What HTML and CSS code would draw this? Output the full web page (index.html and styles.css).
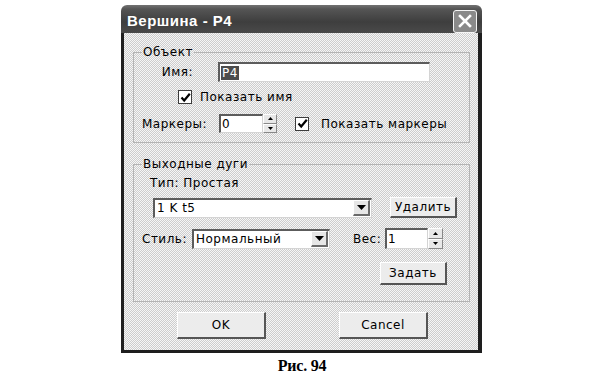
FILE: index.html
```html
<!DOCTYPE html>
<html lang="ru">
<head>
<meta charset="utf-8">
<title>Вершина - P4</title>
<link rel="stylesheet" href="styles.css">
</head>
<body>
<div class="page">
  <div class="window">
    <div class="titlebar">
      <span class="title">Вершина - P4</span>
      <span class="close"><svg width="16" height="16" viewBox="0 0 16 16"><path d="M3 3 L13 13 M13 3 L3 13" stroke="#fff" stroke-width="2.6" stroke-linecap="square"/></svg></span>
    </div>
    <div class="client">
      <fieldset class="group g1">
        <legend>Объект</legend>
        <div class="row r-name">
          <span class="lbl lbl-name">Имя:</span>
          <div class="field f-name"><span class="sel">P4</span></div>
        </div>
        <div class="row r-show">
          <span class="cb"><svg width="11" height="11" viewBox="0 0 11 11"><path d="M1.5 5.5 L4.2 8.5 L9.8 1.8" fill="none" stroke="#000" stroke-width="2.2"/></svg></span>
          <span class="cb-text">Показать имя</span>
        </div>
        <div class="row r-markers">
          <span class="lbl lbl-mark">Маркеры:</span>
          <div class="field f-spin">0</div>
          <div class="spinbtns">
            <span class="sb"><svg width="5" height="3" viewBox="0 0 5 3"><path d="M0 3 L2.5 0 L5 3Z" fill="#000"/></svg></span>
            <span class="sb"><svg width="5" height="3" viewBox="0 0 5 3"><path d="M0 0 L2.5 3 L5 0Z" fill="#000"/></svg></span>
          </div>
          <span class="cb cb-mark"><svg width="11" height="11" viewBox="0 0 11 11"><path d="M1.5 5.5 L4.2 8.5 L9.8 1.8" fill="none" stroke="#000" stroke-width="2.2"/></svg></span>
          <span class="cb-text">Показать маркеры</span>
        </div>
      </fieldset>
      <fieldset class="group g2">
        <legend>Выходные дуги</legend>
        <div class="row r-type">Тип: Простая</div>
        <div class="row r-combo">
          <div class="field combo c-arc"><span class="combo-text">1 K t5</span><span class="drop"><svg width="9" height="5" viewBox="0 0 9 5"><path d="M0 0 L9 0 L4.5 5Z" fill="#000"/></svg></span></div>
          <button class="btn btn-del">Удалить</button>
        </div>
        <div class="row r-style">
          <span class="lbl lbl-style">Стиль:</span>
          <div class="field combo c-style"><span class="combo-text">Нормальный</span><span class="drop"><svg width="9" height="5" viewBox="0 0 9 5"><path d="M0 0 L9 0 L4.5 5Z" fill="#000"/></svg></span></div>
          <span class="lbl lbl-weight">Вес:</span>
          <div class="field f-weight">1</div>
          <div class="spinbtns spin-weight">
            <span class="sb"><svg width="5" height="3" viewBox="0 0 5 3"><path d="M0 3 L2.5 0 L5 3Z" fill="#000"/></svg></span>
            <span class="sb"><svg width="5" height="3" viewBox="0 0 5 3"><path d="M0 0 L2.5 3 L5 0Z" fill="#000"/></svg></span>
          </div>
        </div>
        <div class="row r-set">
          <button class="btn btn-set">Задать</button>
        </div>
      </fieldset>
      <div class="actions">
        <button class="btn btn-main">OK</button>
        <button class="btn btn-main">Cancel</button>
      </div>
    </div>
  </div>
  <div class="caption">Рис. 94</div>
</div>
</body>
</html>
```

FILE: styles.css
```css
html, body {
  margin: 0;
  padding: 0;
  background: #fff;
}

.page {
  width: 604px;
  height: 385px;
  display: flex;
  flex-direction: column;
  font-family: "DejaVu Sans", "Noto Sans", sans-serif;
  font-size: 12px;
  letter-spacing: 0.5px;
  color: #000;
}

.window {
  width: 361px;
  margin: 5px 0 0 121px;
  display: flex;
  flex-direction: column;
}

.titlebar {
  height: 28px;
  border-radius: 6px 6px 0 0;
  background: linear-gradient(#727272 0, #555 4px, #3e3e3e 60%, #4a4a4a 100%);
  display: flex;
  align-items: center;
  padding: 0 5px 0 6px;
}

.title {
  flex: 1;
  font-family: "Liberation Sans", Arial, sans-serif;
  font-weight: bold;
  font-size: 15px;
  letter-spacing: 0.5px;
  color: #fff;
  padding-top: 2px;
}

.close {
  width: 22px;
  height: 21px;
  margin-top: 4px;
  border: 1px solid #f4f4f4;
  border-radius: 3px;
  background: #8a8a8a;
  display: flex;
  align-items: center;
  justify-content: center;
}

.client {
  height: 317px;
  border-style: solid;
  border-color: #1e1e1e;
  border-width: 0 4px 3px 3px;
  background-color: #e2e2e2;
  background-image: repeating-conic-gradient(#f6f6f6 0 25%, #cdcdcd 0 50%);
  background-size: 2px 2px;
  display: flex;
  flex-direction: column;
}

.group {
  margin: 0 8px 0 9px;
  padding: 0 8px 9px 8px;
  border: 1px solid #b4b4b4;
  min-width: 0;
}

.group legend {
  padding: 0 1px;
  line-height: 14px;
}

.g1 { margin-top: 12px; }
.g2 { margin-top: 14px; padding-bottom: 16px; }

.row {
  display: flex;
  align-items: center;
}

.lbl { flex: none; }
.lbl-name { width: 51px; text-align: right; margin-right: 25px; }
.lbl-mark { width: 77px; }
.lbl-style { width: 50px; }
.lbl-weight { width: 32px; margin-left: 23px; }

.field {
  box-sizing: border-box;
  background: #fff;
  border-top: 2px solid #5c5c5c;
  border-left: 2px solid #5c5c5c;
  border-right: 1px solid #d4d4d4;
  border-bottom: 1px solid #d4d4d4;
  display: flex;
  align-items: center;
  padding-left: 1px;
}

.r-name { margin-top: 3px; height: 20px; }
.f-name { width: 212px; height: 20px; }
.sel {
  background: #4c4c4c;
  color: #fff;
  padding: 0 1px;
  line-height: 14px;
}

.r-show { margin-top: 8px; height: 14px; }
.cb {
  box-sizing: border-box;
  width: 14px;
  height: 14px;
  border: 1px solid #3c3c3c;
  background: #fff;
  display: flex;
  align-items: center;
  justify-content: center;
  flex: none;
}
.r-show .cb { margin-left: 36px; }
.cb-text { margin-left: 8px; }

.r-markers { margin-top: 10px; height: 19px; }
.f-spin { width: 44px; height: 19px; }

.spinbtns {
  width: 14px;
  height: 19px;
  display: flex;
  flex-direction: column;
  flex: none;
}
.sb {
  flex: 1;
  box-sizing: border-box;
  border-top: 1px solid #fff;
  border-left: 1px solid #fff;
  border-right: 1px solid #888;
  border-bottom: 1px solid #888;
  background: #e8e8e8;
  display: flex;
  align-items: center;
  justify-content: center;
}
.cb-mark { margin-left: 18px; }
.r-markers .cb-text { margin-left: 12px; }

.r-type { margin-top: 5px; padding-left: 8px; height: 14px; }

.r-combo { margin-top: 7px; }
.combo {
  height: 20px;
  justify-content: space-between;
  padding-right: 1px;
}
.combo-text { padding-left: 1px; }
.c-arc { width: 219px; margin-left: 11px; }
.c-style { width: 138px; }
.drop {
  box-sizing: border-box;
  width: 17px;
  height: 16px;
  border-top: 1px solid #fff;
  border-left: 1px solid #fff;
  border-right: 2px solid #6a6a6a;
  border-bottom: 2px solid #6a6a6a;
  background: #e6e6e6;
  display: flex;
  align-items: center;
  justify-content: center;
}

.btn {
  box-sizing: border-box;
  font: inherit;
  letter-spacing: inherit;
  color: #000;
  padding: 0;
  border-top: 1px solid #fff;
  border-left: 1px solid #fff;
  border-right: 2px solid #555;
  border-bottom: 2px solid #555;
  background: #ececec;
  border-radius: 0;
}
.btn-del { width: 67px; height: 21px; margin-left: 18px; }

.r-style { margin-top: 10px; height: 21px; }
.f-weight { width: 43px; height: 21px; }
.spin-weight { width: 15px; height: 21px; }

.r-set { margin-top: 13px; }
.btn-set { width: 67px; height: 23px; margin-left: 238px; }

.actions {
  margin-top: 10px;
  display: flex;
  padding-left: 53px;
  gap: 73px;
}
.btn-main { width: 89px; height: 27px; }

.caption {
  margin-top: 5px;
  text-align: center;
  font-family: "Liberation Serif", "Times New Roman", serif;
  font-weight: bold;
  font-size: 16px;
  letter-spacing: -0.2px;
  line-height: 16px;
}
```
